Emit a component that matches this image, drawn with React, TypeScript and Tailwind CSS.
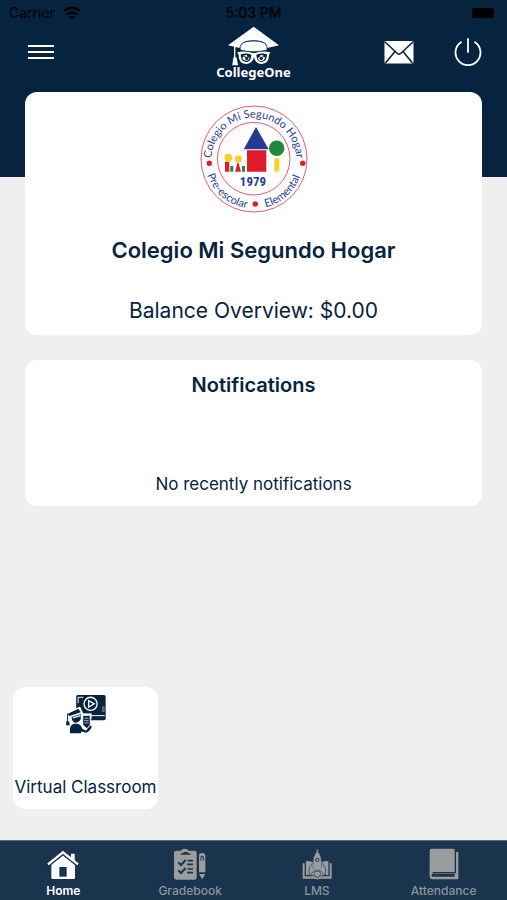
import type { ReactNode } from 'react'

interface Tab {
  label: string
  icon: ReactNode
}

function WifiIcon() {
  return (
    <svg viewBox="186 16 54 44" className="h-[14px] w-[18px]" fill="none" stroke="#000" strokeWidth="8">
      <path d="M189 31q24-20 48 0" />
      <path d="M197 43q16-14 32 0" />
      <path d="M204 50q9-7 18 0l-9 9z" fill="#000" stroke="none" />
    </svg>
  )
}

function CollegeOneLogo() {
  return (
    <svg viewBox="172 76 159 120" className="h-10 w-[53px]" aria-hidden="true">
      <path d="M252 78 328 134 293 142Q292 119 252 119 212 119 210 142L175 134Z" fill="#fff" />
      <path d="M212 148Q205 121 252 121 297 121 292 148 252 158 212 148Z" fill="#fff" stroke="#062340" strokeWidth="2" />
      <path d="M195 136v34M190 192l3-20h6l4 20z" fill="#fff" stroke="#fff" strokeWidth="4" />
      <path
        d="M203 155Q226 149 252 158 278 149 302 155L298 163Q298 189 275 190 257 190 253 170 248 190 229 190 207 189 207 163Z"
        fill="#fff"
      />
      <path d="M213 161q17-5 32 1 0 22-17 22-15-1-15-23zM260 162q16-6 32-1 0 22-16 23-15-1-16-22z" fill="#062340" />
      <path d="M218 173q3-12 14-10-1 8 8 8-3 9-11 9t-11-7zM264 171q8 0 8-8 12-1 14 9-3 9-11 9t-11-10z" fill="#fff" />
      <circle cx="231" cy="173" r="5" fill="#062340" />
      <circle cx="275" cy="173" r="5" fill="#062340" />
      <path d="M221 167h7M279 167h7" stroke="#062340" strokeWidth="3" />
    </svg>
  )
}

function MailIcon() {
  return (
    <svg viewBox="0 0 30 24" className="h-6 w-[30px]" aria-hidden="true">
      <rect x=".5" y="1" width="29" height="22.5" rx="1.5" fill="#fff" />
      <path d="m1 2 12.4 11.5q1.6 1.5 3.2 0L29 2M1.5 23l9.5-11.5M28.5 23 19 11.5" fill="none" stroke="#062340" strokeWidth="1.6" />
    </svg>
  )
}

function PowerIcon() {
  return (
    <svg viewBox="0 0 28 28" className="size-7" fill="none" stroke="#fff" strokeWidth="1.8" strokeLinecap="round" aria-hidden="true">
      <path d="M14 1v13M7 4.300a12.500 12.500 0 1 0 14 0" />
    </svg>
  )
}

function SchoolLogo() {
  return (
    <svg viewBox="0 0 108 108" className="size-[108px]" role="img" aria-label="Colegio Mi Segundo Hogar">
      <defs>
        <path id="arc-top" d="M11.600 58A42.500 42.500 0 1 1 96.400 58" />
        <path id="arc-bottom" d="M4.500 54A49.500 49.500 0 0 0 103.500 54" />
      </defs>
      <g fill="none" stroke="#e2475a">
        <circle cx="54" cy="54" r="53" strokeWidth=".9" />
        <circle cx="53.700" cy="53.700" r="36.300" strokeWidth=".9" />
      </g>
      <g fill="#2b3b92" fontFamily="Lato, sans-serif" fontSize="11">
        <text textAnchor="middle">
          <textPath href="#arc-top" startOffset="50%">Colegio Mi Segundo Hogar</textPath>
        </text>
        <text textAnchor="middle">
          <textPath href="#arc-bottom" startOffset="28%">Pre-escolar</textPath>
        </text>
        <text textAnchor="middle">
          <textPath href="#arc-bottom" startOffset="73%">Elemental</textPath>
        </text>
      </g>
      <g fill="#e01b2c">
        <circle cx="9.300" cy="58.300" r="2.700" />
        <circle cx="102.700" cy="58.300" r="2.700" />
        <circle cx="55.300" cy="99" r="2.700" />
        <path d="M47 45.300h19.300v21.400H47zM25 56.700h4.300v10H25zM38 56l3 10.700h-6z" />
      </g>
      <path d="M56 22 68.700 44.300H43.700z" fill="#263a94" />
      <g fill="#1c8a3a">
        <circle cx="76.700" cy="43.300" r="7.700" />
        <path d="M30.300 61h3v5.700h-3zM42 61h3v5.700h-3z" />
      </g>
      <g fill="#f5d327">
        <circle cx="28.300" cy="52.700" r="3.900" />
        <circle cx="38.300" cy="54" r="3.600" />
        <path d="M74.300 53.300h5v13.400h-5z" />
      </g>
      <text x="53" y="81" textAnchor="middle" fill="#2b3b92" fontSize="13" fontWeight="bold" fontFamily="'Roboto Condensed', Roboto, sans-serif">
        1979
      </text>
    </svg>
  )
}

function ClassroomIcon() {
  return (
    <svg viewBox="193 43 126 122" className="h-10 w-[42px]" aria-hidden="true">
      <rect x="226" y="46" width="90" height="77" rx="5" fill="#062340" />
      <path d="M241 109h72M232 71V53h16" fill="none" stroke="#fff" strokeWidth="3" />
      <path d="M247 102v18h26v-18" fill="#fff" />
      <path d="M305 83h8M305 89h8M305 95h8" stroke="#fff" strokeWidth="2" />
      <circle cx="270" cy="73" r="20" fill="none" stroke="#fff" strokeWidth="4" />
      <path d="m264 63 17 10-17 10z" fill="none" stroke="#fff" strokeWidth="4" />
      <path d="M194 101l44-20 10 22v30l-38 4-14-22z" fill="#fff" />
      <path d="m199 104 34-16 7 11-34 11zM212 113l28-9v16q-8 13-21 10-7-5-7-17z" fill="#062340" />
      <path d="m216 116 23-7" stroke="#fff" strokeWidth="4" />
      <path d="M200 103v24" stroke="#062340" strokeWidth="3" />
      <path d="M196 126h8l3 12h-12z" fill="#062340" />
      <path d="M207 163v-14q2-17 22-15 12 2 15 14l12 7 12-17 6 4q-6 15-17 19l-16-4v6z" fill="#062340" />
      <path d="M246 108h23v29l-10 12-13-12z" fill="#062340" stroke="#fff" strokeWidth="3" />
      <path d="M251 117h13M251 124h13M251 131h13" stroke="#fff" strokeWidth="2" />
    </svg>
  )
}

function HomeIcon() {
  return (
    <svg viewBox="144 64 96 88" className="h-[30px] w-8" aria-hidden="true">
      <path d="M157 106 192 77 228 106V146q0 4-4 4H161q-4 0-4-4z" fill="#fff" />
      <path d="m146 110 46-37 46 37" fill="none" stroke="#1b344e" strokeWidth="10" />
      <path d="M216 74h11v24l-11-9z" fill="#fff" />
      <path d="m147 106 45-36 45 36" fill="none" stroke="#fff" strokeWidth="7" />
      <path d="M181 114h22v29h-22z" fill="#1b344e" />
    </svg>
  )
}

function GradebookIcon() {
  return (
    <svg viewBox="106 52 96 96" className="size-8" aria-hidden="true">
      <path d="M113 60h14q3-6 10-6 7 0 10 6h22q5 0 5 6v75q0 6-6 6h-55q-7 0-7-7V67q0-7 7-7z" fill="#9a9c9d" />
      <path d="M124 71q0-8 8-9 2-7 9-7t9 7q8 1 8 9z" fill="#9a9c9d" />
      <path d="M125 72q1-5 9-6 7-6 14 0 8 1 9 6z" fill="#1b344e" />
      <path d="m119 95 8 8 14-15M119 119l8 8 14-15" fill="none" stroke="#1b344e" strokeWidth="6" />
      <path d="M147 90h16M145 101h18M147 115h16M145 126h18" stroke="#1b344e" strokeWidth="5" />
      <path d="M181 125V73q0-6 9-6t10 6v52zM181 130h19l-9 16z" fill="#9a9c9d" />
      <path d="M187 90V77h7v13" fill="none" stroke="#1b344e" strokeWidth="3" />
    </svg>
  )
}

function LmsIcon() {
  return (
    <svg viewBox="125 52 92 97" className="h-8 w-[30px]" aria-hidden="true">
      <path d="M127 98h6v40h31l8 5 8-5h30V98h6v48h-36l-8 2-8-2h-37z" fill="#9a9c9d" />
      <path d="M137 92q15-3 35 8 20-11 34-8v43q-20-3-34 5-15-8-35-5z" fill="#9a9c9d" />
      <path d="M172 53q3 3 4 12 10 13 9 30l12 18v22q-10-8-17-14h-16l-17 14v-22l12-18q-1-17 9-30 1-9 4-12z" fill="#9a9c9d" stroke="#1b344e" strokeWidth="2" />
      <path d="M159 97v18M185 97v18M163 119h18M172 56v10" stroke="#6b7f98" strokeWidth="4" />
      <circle cx="172" cy="88" r="5" fill="#9a9c9d" stroke="#1b344e" strokeWidth="3" />
      <path d="M165 123h14l3 9-10 12-10-12z" fill="#9a9c9d" stroke="#1b344e" strokeWidth="2" />
    </svg>
  )
}

function AttendanceIcon() {
  return (
    <svg viewBox="147 52 90 96" className="h-8 w-[30px]" aria-hidden="true">
      <path d="M155 54h65q4 0 4 4v66h-66q-5 0-9 4V60q0-6 6-6z" fill="#9a9c9d" />
      <path d="M228 64h7v82h-77q-9 0-9-9V120h9v8h70z" fill="#9a9c9d" />
      <path d="M156 129h68v9h-68q-3-4 0-9z" fill="#1b344e" />
    </svg>
  )
}

const tabs: Tab[] = [
  { label: 'Home', icon: <HomeIcon /> },
  { label: 'Gradebook', icon: <GradebookIcon /> },
  { label: 'LMS', icon: <LmsIcon /> },
  { label: 'Attendance', icon: <AttendanceIcon /> },
]

function Header() {
  return (
    <header className="bg-[#062340] pb-[99px]">
      <div className="grid h-[26px] grid-cols-3 items-center px-[9px] text-sm text-black">
        <div className="flex items-center gap-2">
          <span>Carrier</span>
          <WifiIcon />
        </div>
        <span className="text-center font-medium">5:03 PM</span>
        <span className="mr-1 h-[10px] w-[22px] justify-self-end rounded-xs bg-black" />
      </div>
      <div className="grid h-[52px] grid-cols-3 items-center px-[25px]">
        <button type="button" aria-label="Menu" className="flex w-8 flex-col gap-1 px-[3px] py-2">
          <span className="h-[2px] bg-white" />
          <span className="h-[2px] bg-white" />
          <span className="h-[2px] bg-white" />
        </button>
        <div className="flex flex-col items-center">
          <CollegeOneLogo />
          <span className="font-['Noto_Sans',sans-serif] text-[13px] leading-3 font-bold text-white">CollegeOne</span>
        </div>
        <div className="flex items-center gap-10 justify-self-end">
          <button type="button" aria-label="Messages">
            <MailIcon />
          </button>
          <button type="button" aria-label="Log out">
            <PowerIcon />
          </button>
        </div>
      </div>
    </header>
  )
}

export default function App() {
  return (
    <div className="flex min-h-screen flex-col bg-[#efefef] font-[Inter,sans-serif] text-[#062340]">
      <Header />
      <main className="-mt-[85px] flex grow flex-col">
        <section className="mx-[25px] flex flex-col items-center rounded-xl bg-white pt-[13px] pb-2">
          <SchoolLogo />
          <h1 className="mt-[21px] text-[22px] leading-8 font-semibold">Colegio Mi Segundo Hogar</h1>
          <p className="mt-[29px] text-[21px] leading-8">Balance Overview: $0.00</p>
        </section>

        <section className="mx-[25px] mt-[25px] flex flex-col items-center rounded-xl bg-white pt-[9px] pb-[10px]">
          <h2 className="text-xl leading-8 font-semibold">Notifications</h2>
          <p className="mt-[71px] text-[17px] leading-6">No recently notifications</p>
        </section>

        <button
          type="button"
          className="mt-auto mb-[31px] ml-[13px] flex w-[145px] flex-col items-center rounded-xl bg-white pt-[7px] pb-[10px]"
        >
          <ClassroomIcon />
          <span className="mt-[41px] text-[17px] leading-6 whitespace-nowrap">Virtual Classroom</span>
        </button>
      </main>

      <nav className="grid h-[60px] grid-cols-4 border-t border-[#5b6c7d] bg-[#1b344e]">
        {tabs.map((tab, i) => (
          <a
            key={tab.label}
            href="#"
            className={`flex flex-col items-center pt-[7px] text-xs ${i === 0 ? 'font-semibold text-white' : 'font-medium text-[#8b949c]'}`}
          >
            <span className="flex h-8 items-end">{tab.icon}</span>
            <span className="mt-[3px]">{tab.label}</span>
          </a>
        ))}
      </nav>
    </div>
  )
}
